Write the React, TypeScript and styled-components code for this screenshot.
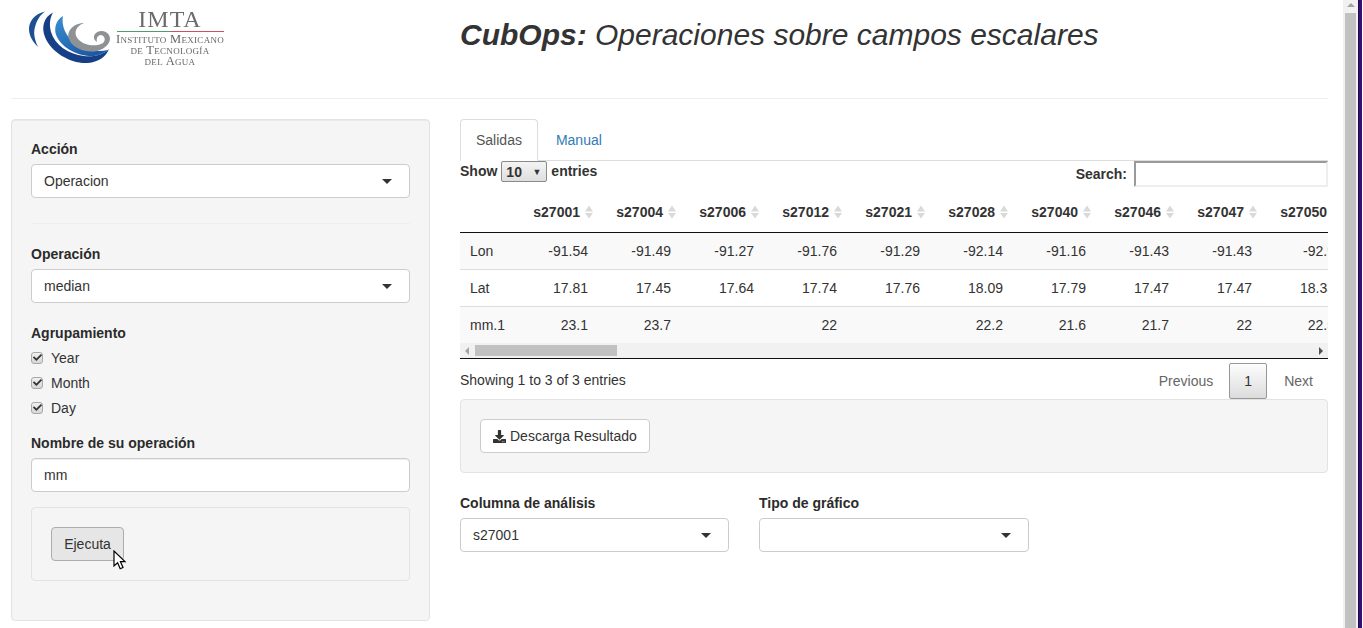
import React from 'react';
import styled, { createGlobalStyle } from 'styled-components';
import { FaCheck, FaDownload } from 'react-icons/fa';

const columns = ['s27001', 's27004', 's27006', 's27012', 's27021', 's27028', 's27040', 's27046', 's27047', 's27050'];

const rows = [
  { name: 'Lon', values: ['-91.54', '-91.49', '-91.27', '-91.76', '-91.29', '-92.14', '-91.16', '-91.43', '-91.43', '-92.9'] },
  { name: 'Lat', values: ['17.81', '17.45', '17.64', '17.74', '17.76', '18.09', '17.79', '17.47', '17.47', '18.33'] },
  { name: 'mm.1', values: ['23.1', '23.7', '', '22', '', '22.2', '21.6', '21.7', '22', '22.5'] },
];

const Logo = () => (
  <LogoSvg viewBox="0 0 200 60" width="200" height="60">
    <defs>
      <linearGradient id="midSwoosh" x1="0" y1="0" x2="0.6" y2="1">
        <stop offset="0" stopColor="#3b90d2" />
        <stop offset="1" stopColor="#1c5aa6" />
      </linearGradient>
    </defs>
    <path d="M17 2.5 C6 5 1 13 1 20 C1 27 5 33 10 38 C7 31 5 25 7 18 C9 11 12 6 17 2.5 Z" fill="#1d4f93" />
    <path d="M25 3.5 C16 8 13 18 17 28 C23 43 42 55 60 54 C70 53 78 48 81 40 C75 46 66 48 56 47 C40 45 27 36 23 23 C21 15 22 9 25 3.5 Z" fill="#173f86" />
    <path d="M35 7 C28 11 25 20 29 28 C35 40 52 48 66 47 C72 46 77 44 80 41 C70 43 58 42 48 35 C38 28 33 17 35 7 Z" fill="url(#midSwoosh)" />
    <path d="M56 14 C45 14 38 23 41 30 C45 41 62 45 72 41 C80 38 84 31 81 26 C78 21 70 21 67 25 C65 28 66 31 69 33 C68 29 70 26 73 26 C77 27 78 31 75 34 C69 38 56 37 50 30 C45 24 48 17 56 14 Z" fill="#8f9294" />
    <LogoTitle x="142" y="18" textAnchor="middle">IMTA</LogoTitle>
    <rect x="89" y="22" width="54" height="1" fill="#4f9d6a" />
    <rect x="143" y="22" width="53" height="1" fill="#d0505f" />
    <LogoLine x="142" y="34" textAnchor="middle">Instituto Mexicano</LogoLine>
    <LogoLine x="142" y="45" textAnchor="middle">de Tecnología</LogoLine>
    <LogoLine x="142" y="56" textAnchor="middle">del Agua</LogoLine>
  </LogoSvg>
);

const SortIcon = () => (
  <SortSvg viewBox="0 0 10 16" width="10" height="16">
    <path d="M5 1.5 L9 7.5 H1 Z M5 14.5 L1 9 H9 Z" fill="#d9d9d9" />
  </SortSvg>
);

const Dropdown = ({ value }: { value?: string }) => (
  <SelectBox>
    <span>{value}</span>
    <Caret />
  </SelectBox>
);

const Check = ({ label }: { label: string }) => (
  <CheckRow>
    <CheckBox><FaCheck size={9} /></CheckBox>
    {label}
  </CheckRow>
);

const App = () => {
  return (
    <Root>
      <GlobalStyle />
      <Page>
        <Header>
          <LogoCell><Logo /></LogoCell>
          <Title><b>CubOps:</b> Operaciones sobre campos escalares</Title>
        </Header>
        <Main>
          <Sidebar>
            <Label>Acción</Label>
            <Dropdown value="Operacion" />
            <Rule />
            <Label>Operación</Label>
            <Dropdown value="median" />
            <GroupLabel>Agrupamiento</GroupLabel>
            <Check label="Year" />
            <Check label="Month" />
            <Check label="Day" />
            <NameLabel>Nombre de su operación</NameLabel>
            <TextBox>mm</TextBox>
            <InnerWell>
              <RunButton>
                Ejecuta
                <Cursor viewBox="0 0 14 20" width="14" height="20">
                  <path d="M1 1 V16 L4.6 12.7 L7.2 18.7 L10 17.5 L7.4 11.6 H12 Z" fill="#fff" stroke="#000" strokeWidth="1.2" />
                </Cursor>
              </RunButton>
            </InnerWell>
          </Sidebar>
          <Content>
            <Tabs>
              <ActiveTab>Salidas</ActiveTab>
              <TabLink>Manual</TabLink>
            </Tabs>
            <TableControls>
              <LengthControl>
                Show <LengthSelect>10<small>▼</small></LengthSelect> entries
              </LengthControl>
              <SearchControl>
                Search: <SearchBox />
              </SearchControl>
            </TableControls>
            <TableClip>
              <DataTable>
                <thead>
                  <tr>
                    <HeadCell />
                    {columns.map((col) => (
                      <HeadCell key={col}>
                        <HeadInner>{col}<SortIcon /></HeadInner>
                      </HeadCell>
                    ))}
                  </tr>
                </thead>
                <tbody>
                  {rows.map((row, i) => (
                    <BodyRow key={row.name} $striped={i % 2 === 0}>
                      <NameCell>{row.name}</NameCell>
                      {row.values.map((value, j) => (
                        <ValueCell key={j}>{value}</ValueCell>
                      ))}
                    </BodyRow>
                  ))}
                </tbody>
              </DataTable>
            </TableClip>
            <HScroll>
              <ArrowLeft />
              <HThumb />
              <ArrowRight />
            </HScroll>
            <TableFooter>
              <span>Showing 1 to 3 of 3 entries</span>
              <Pager>
                <PagerLink>Previous</PagerLink>
                <PagerCurrent>1</PagerCurrent>
                <PagerLink>Next</PagerLink>
              </Pager>
            </TableFooter>
            <DownloadWell>
              <DownloadButton><FaDownload size={13} /> Descarga Resultado</DownloadButton>
            </DownloadWell>
            <PlotControls>
              <div>
                <Label>Columna de análisis</Label>
                <Dropdown value="s27001" />
              </div>
              <div>
                <Label>Tipo de gráfico</Label>
                <Dropdown />
              </div>
            </PlotControls>
          </Content>
        </Main>
      </Page>
      <VScroll>
        <ArrowUp />
        <VThumb />
      </VScroll>
      <DesktopEdge />
    </Root>
  );
};

export default App;

const GlobalStyle = createGlobalStyle`
  html, body {
    margin: 0;
    padding: 0;
    height: 100%;
    overflow: hidden;
    background: #fff;
  }
  * {
    box-sizing: border-box;
  }
  body {
    font-family: "Liberation Sans", Arial, sans-serif;
    font-size: 14px;
    line-height: 20px;
    color: #333;
  }
`;

const Root = styled.div`
  display: flex;
  width: 1363px;
  height: 628px;
  overflow: hidden;
`;

const Page = styled.div`
  flex: 0 0 1343px;
  padding: 0 15px 0 11px;
`;

const VScroll = styled.div`
  flex: 0 0 15px;
  background: #f1f1f1;
  display: flex;
  flex-direction: column;
  align-items: center;
  padding: 3px 2px 0;
`;

const ArrowUp = styled.div`
  width: 0;
  height: 0;
  border-left: 4px solid transparent;
  border-right: 4px solid transparent;
  border-bottom: 4px solid #a3a3a3;
  margin-bottom: 6px;
`;

const VThumb = styled.div`
  width: 11px;
  height: 615px;
  background: #c1c1c1;
`;

const DesktopEdge = styled.div`
  flex: 0 0 4px;
  background: #3d0a78;
  border-left: 1px solid #14143a;
`;

const Header = styled.header`
  display: grid;
  grid-template-columns: 449px 1fr;
  height: 99px;
  border-bottom: 1px solid #eee;
`;

const LogoCell = styled.div`
  padding: 9px 0 0 17px;
`;

const LogoSvg = styled.svg`
  display: block;
  filter: blur(0.35px);
`;

const LogoTitle = styled.text`
  font-family: "Liberation Serif", serif;
  font-size: 24px;
  letter-spacing: 1px;
  fill: #6b6b6d;
`;

const LogoLine = styled.text`
  font-family: "Liberation Serif", serif;
  font-size: 12.5px;
  font-variant: small-caps;
  letter-spacing: 0.3px;
  fill: #666;
`;

const Title = styled.h1`
  margin: 0;
  padding-top: 18px;
  font-size: 30px;
  line-height: 33px;
  font-weight: 400;
  font-style: italic;
  color: #333;
`;

const Main = styled.div`
  display: grid;
  grid-template-columns: 419px 868px;
  column-gap: 30px;
  padding-top: 20px;
  align-items: start;
`;

const Sidebar = styled.aside`
  height: 502px;
  padding: 19px;
  background: #f5f5f5;
  border: 1px solid #e3e3e3;
  border-radius: 4px;
  box-shadow: inset 0 1px 1px rgba(0, 0, 0, 0.05);
`;

const Label = styled.div`
  font-weight: 700;
  margin-bottom: 5px;
  color: #2b2b2b;
`;

const GroupLabel = styled(Label)`
  margin: 20px 0 2px;
`;

const NameLabel = styled(Label)`
  margin: 13px 0 5px;
`;

const SelectBox = styled.div`
  display: flex;
  align-items: center;
  justify-content: space-between;
  height: 34px;
  padding: 0 17px 0 12px;
  background: #fff;
  border: 1px solid #ccc;
  border-radius: 4px;
  color: #333;
`;

const Caret = styled.i`
  width: 0;
  height: 0;
  border-left: 5px solid transparent;
  border-right: 5px solid transparent;
  border-top: 5px solid #333;
`;

const Rule = styled.hr`
  margin: 25px 0 20px;
  border: 0;
  border-top: 1px solid #eee;
`;

const CheckRow = styled.div`
  display: flex;
  align-items: center;
  gap: 8px;
  height: 25px;
  color: #333;
`;

const CheckBox = styled.span`
  display: flex;
  align-items: center;
  justify-content: center;
  width: 12px;
  height: 12px;
  border: 1px solid #a8a8a8;
  border-radius: 3px;
  background: linear-gradient(#f0f0f0, #d6d6d6);
  color: #333;
`;

const TextBox = styled.div`
  height: 34px;
  padding: 6px 12px;
  background: #fff;
  border: 1px solid #ccc;
  border-radius: 4px;
  box-shadow: inset 0 1px 1px rgba(0, 0, 0, 0.075);
`;

const InnerWell = styled.div`
  height: 74px;
  margin-top: 15px;
  padding: 19px;
  background: #f5f5f5;
  border: 1px solid #e3e3e3;
  border-radius: 4px;
`;

const RunButton = styled.div`
  position: relative;
  width: 73px;
  height: 34px;
  line-height: 32px;
  text-align: center;
  background: #e6e6e6;
  border: 1px solid #adadad;
  border-radius: 4px;
  color: #333;
`;

const Cursor = styled.svg`
  position: absolute;
  left: 61px;
  top: 22px;
`;

const Content = styled.main`
  min-width: 0;
`;

const Tabs = styled.nav`
  display: flex;
  height: 42px;
  border-bottom: 1px solid #ddd;
`;

const ActiveTab = styled.div`
  height: 42px;
  padding: 10px 15px;
  background: #fff;
  border: 1px solid #ddd;
  border-bottom-color: #fff;
  border-radius: 4px 4px 0 0;
  color: #555;
`;

const TabLink = styled.div`
  padding: 11px 18px 0;
  color: #337ab7;
`;

const TableControls = styled.div`
  display: flex;
  justify-content: space-between;
  align-items: flex-start;
  height: 38px;
  font-weight: 700;
`;

const LengthControl = styled.div`
  display: flex;
  align-items: flex-start;
  gap: 4px;
  height: 21px;
`;

const LengthSelect = styled.span`
  display: flex;
  align-items: center;
  justify-content: space-between;
  width: 46px;
  height: 21px;
  padding: 0 5px 0 4px;
  background: linear-gradient(#f4f4f4, #dedede);
  border: 1px solid #8a8a8a;
  border-radius: 2px;
  font-weight: 700;

  small {
    font-size: 9px;
    color: #333;
  }
`;

const SearchControl = styled.label`
  display: flex;
  align-items: center;
  gap: 7px;
  height: 26px;
`;

const SearchBox = styled.span`
  width: 194px;
  height: 26px;
  background: #fff;
  border: 2px solid #eee;
  border-top-color: #9a9a9a;
  border-left-color: #9a9a9a;
`;

const TableClip = styled.div`
  overflow: hidden;
  width: 868px;
`;

const DataTable = styled.table`
  table-layout: fixed;
  width: 885px;
  border-collapse: separate;
  border-spacing: 0;

  th:first-child {
    width: 55px;
  }
`;

const HeadCell = styled.th`
  width: 83px;
  height: 34px;
  padding: 0;
  border-bottom: 1px solid #111;
  vertical-align: top;
  font-weight: 700;
  color: #333;
`;

const HeadInner = styled.div`
  display: flex;
  align-items: center;
  justify-content: flex-end;
  gap: 4px;
  height: 26px;
  padding-right: 4px;
`;

const SortSvg = styled.svg`
  flex: none;
`;

const BodyRow = styled.tr<{ $striped: boolean }>`
  background: ${({ $striped }) => ($striped ? '#f9f9f9' : '#fff')};

  &:first-child td {
    height: 36px;
  }

  &:not(:first-child) td {
    border-top: 1px solid #ddd;
  }
`;

const NameCell = styled.td`
  height: 37px;
  padding: 0 0 0 10px;
`;

const ValueCell = styled.td`
  height: 37px;
  padding: 0 10px 0 0;
  text-align: right;
  white-space: nowrap;
`;

const HScroll = styled.div`
  display: flex;
  align-items: center;
  height: 16px;
  padding: 0 5px;
  background: #f1f1f1;
  border-bottom: 1px solid #111;
`;

const ArrowLeft = styled.i`
  width: 0;
  height: 0;
  border-top: 4px solid transparent;
  border-bottom: 4px solid transparent;
  border-right: 4px solid #a3a3a3;
  margin-right: 6px;
`;

const ArrowRight = styled.i`
  width: 0;
  height: 0;
  margin-left: auto;
  border-top: 4px solid transparent;
  border-bottom: 4px solid transparent;
  border-left: 4px solid #505050;
`;

const HThumb = styled.div`
  width: 142px;
  height: 11px;
  background: #c1c1c1;
`;

const TableFooter = styled.div`
  display: flex;
  justify-content: space-between;
  height: 40px;
  padding-top: 4px;

  > span {
    padding-top: 7px;
  }
`;

const Pager = styled.div`
  display: flex;
  align-items: flex-start;
  margin-right: -1px;
`;

const PagerLink = styled.span`
  height: 36px;
  padding: 8px 16px 0 17px;
  color: #666;
`;

const PagerCurrent = styled.span`
  width: 38px;
  height: 36px;
  padding-top: 7px;
  text-align: center;
  background: linear-gradient(#fdfdfd, #dcdcdc);
  border: 1px solid #979797;
  border-radius: 2px;
`;

const DownloadWell = styled.section`
  height: 74px;
  padding: 19px;
  background: #f5f5f5;
  border: 1px solid #e3e3e3;
  border-radius: 4px;
`;

const DownloadButton = styled.div`
  display: inline-flex;
  align-items: center;
  gap: 4px;
  height: 34px;
  padding: 0 12px;
  background: #fff;
  border: 1px solid #ccc;
  border-radius: 4px;
`;

const PlotControls = styled.div`
  display: grid;
  grid-template-columns: 269px 270px;
  column-gap: 30px;
  padding-top: 20px;
`;
